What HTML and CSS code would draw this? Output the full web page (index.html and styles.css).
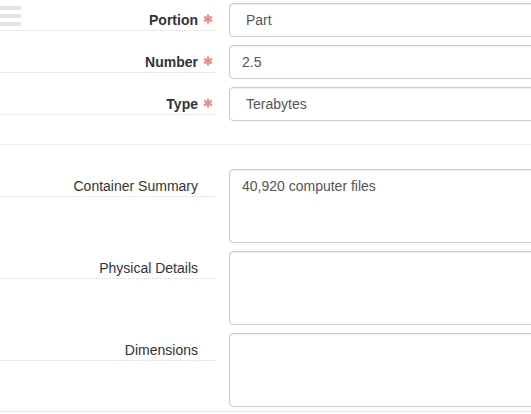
FILE: index.html
```html
<!DOCTYPE html>
<html>
<head>
<meta charset="utf-8">
<link rel="stylesheet" href="styles.css">
</head>
<body>
<div class="menu-toggle"><span></span><span></span><span></span></div>
<form class="form">
  <div class="row">
    <label class="label required">Portion<svg class="req" width="10" height="10" viewBox="0 0 10 10"><path d="M5 0.5V9.5M1.1 2.75L8.9 7.25M1.1 7.25L8.9 2.75" stroke="#ec8c8c" stroke-width="2.2"/></svg></label>
    <div class="control select">Part</div>
  </div>
  <div class="row">
    <label class="label required">Number<svg class="req" width="10" height="10" viewBox="0 0 10 10"><path d="M5 0.5V9.5M1.1 2.75L8.9 7.25M1.1 7.25L8.9 2.75" stroke="#ec8c8c" stroke-width="2.2"/></svg></label>
    <div class="control">2.5</div>
  </div>
  <div class="row">
    <label class="label required">Type<svg class="req" width="10" height="10" viewBox="0 0 10 10"><path d="M5 0.5V9.5M1.1 2.75L8.9 7.25M1.1 7.25L8.9 2.75" stroke="#ec8c8c" stroke-width="2.2"/></svg></label>
    <div class="control select">Terabytes</div>
  </div>
  <hr class="divider">
  <div class="row">
    <label class="label">Container Summary</label>
    <div class="control area">40,920 computer files</div>
  </div>
  <div class="row">
    <label class="label">Physical Details</label>
    <div class="control area"></div>
  </div>
  <div class="row last">
    <label class="label">Dimensions</label>
    <div class="control area"></div>
  </div>
  <div class="bottom-line"></div>
</form>
</body>
</html>
```
FILE: styles.css
```css
html, body {
  margin: 0;
  padding: 0;
  background: #fff;
  overflow: hidden;
}
body {
  font-family: "Liberation Sans", Arial, sans-serif;
  font-size: 14px;
  color: #333;
  width: 531px;
  height: 414px;
  position: relative;
}
.menu-toggle {
  position: absolute;
  left: 0;
  top: 6px;
  width: 21px;
  display: flex;
  flex-direction: column;
  gap: 4px;
}
.menu-toggle span {
  display: block;
  height: 4px;
  background: #e4e4e4;
}
.form {
  padding-top: 3px;
  width: 531px;
  overflow: hidden;
}
.row {
  display: flex;
  align-items: flex-start;
  gap: 14px;
  margin-bottom: 8px;
}
.label {
  width: 215px;
  box-sizing: border-box;
  flex: 0 0 auto;
  text-align: right;
  padding: 7px 17px 0 0;
  line-height: 20px;
  height: 28px;
  border-bottom: 1px dotted #d8d8d8;
}
.label.required {
  font-weight: bold;
}
.req {
  display: inline-block;
  vertical-align: top;
  margin-top: 4px;
  margin-left: 5px;
  margin-right: -15px;
}
.control {
  flex: 1 1 auto;
  margin-right: -8px;
  height: 34px;
  box-sizing: border-box;
  border: 1px solid #ccc;
  border-radius: 4px;
  padding: 6px 12px;
  line-height: 20px;
  color: #555;
  box-shadow: inset 0 1px 1px rgba(0,0,0,0.075);
}
.control.select {
  padding-left: 16px;
}
.control.area {
  height: 74px;
}
.divider {
  border: 0;
  border-top: 1px solid #eee;
  margin: 23px 0 24px;
  height: 0;
}
.row.last {
  margin-bottom: 4px;
}
.bottom-line {
  border-top: 1px solid #e3e3e3;
}
```
